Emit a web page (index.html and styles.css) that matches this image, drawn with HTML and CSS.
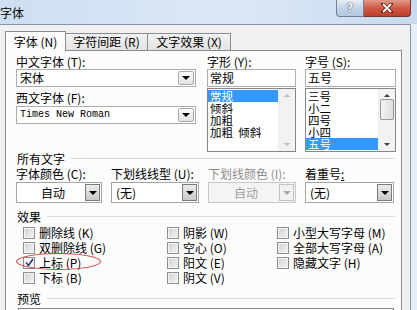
FILE: index.html
```html
<!DOCTYPE html>
<html lang="zh-CN">
<head>
  <meta charset="UTF-8" />
  <title>字体</title>
  <link rel="stylesheet" href="styles.css">
</head>
<body>

  <!-- Title bar -->
  <div class="titlebar">
    <span class="title">字体</span>
    <div class="caption-btns">
      <span class="cap-btn help">?</span>
      <span class="cap-btn close">
        <svg width="12" height="10" viewBox="0 0 12 10">
          <path d="M2 1 L10 9 M10 1 L2 9" stroke="#5a1d14" stroke-width="3.4" stroke-linecap="square"/>
          <path d="M2 1 L10 9 M10 1 L2 9" stroke="#fff" stroke-width="2"/>
        </svg>
      </span>
    </div>
  </div>

  <div class="frame">
    <div class="client">

      <!-- Tabs -->
      <div class="tabs">
        <span class="tab active">字体 (N)</span>
        <span class="tab">字符间距 (R)</span>
        <span class="tab">文字效果 (X)</span>
      </div>

      <div class="page">

        <!-- Font / style / size -->
        <div class="font-grid">
          <div class="col">
            <div class="label">中文字体 (T):</div>
            <div class="combo"><span class="val">宋体</span><span class="drop"></span></div>
            <div class="label second">西文字体 (F):</div>
            <div class="combo mono"><span class="val">Times New Roman</span><span class="drop"></span></div>
          </div>
          <div class="col">
            <div class="label">字形 (Y):</div>
            <div class="field">常规</div>
            <div class="listbox">
              <ul>
                <li class="sel">常规</li>
                <li>倾斜</li>
                <li>加粗</li>
                <li>加粗&nbsp;&nbsp;倾斜</li>
              </ul>
              <div class="vscroll off">
                <span class="arr up"></span>
                <span class="arr down"></span>
              </div>
            </div>
          </div>
          <div class="col">
            <div class="label">字号 (S):</div>
            <div class="field">五号</div>
            <div class="listbox">
              <ul>
                <li>三号</li>
                <li>小二</li>
                <li>四号</li>
                <li>小四</li>
                <li class="sel">五号</li>
              </ul>
              <div class="vscroll">
                <span class="arr up"></span>
                <span class="thumb"></span>
                <span class="arr down"></span>
              </div>
            </div>
          </div>
        </div>

        <!-- All text -->
        <div class="section"><span>所有文字</span></div>
        <div class="combo-grid">
          <div>
            <div class="label">字体颜色 (C):</div>
            <div class="combo big center"><span class="val">自动</span><span class="drop dark"></span></div>
          </div>
          <div>
            <div class="label">下划线线型 (U):</div>
            <div class="combo big"><span class="val">(无)</span><span class="drop dark"></span></div>
          </div>
          <div>
            <div class="label disabled">下划线颜色 (I):</div>
            <div class="combo big center off"><span class="val">自动</span><span class="drop"></span></div>
          </div>
          <div>
            <div class="label">着重号<u>:</u></div>
            <div class="combo big"><span class="val">(无)</span><span class="drop dark"></span></div>
          </div>
        </div>

        <!-- Effects -->
        <div class="section"><span>效果</span></div>
        <div class="checks">
          <div class="check-col first">
            <div class="check"><i class="box"></i>删除线 (K)</div>
            <div class="check"><i class="box"></i>双删除线 (G)</div>
            <div class="check marked">
              <i class="box on">
                <svg width="9" height="9" viewBox="0 0 9 9"><path d="M1 4.5 L3.5 7.5 L8 1" fill="none" stroke="#24377a" stroke-width="1.6"/></svg>
              </i>上标 (P)
              <span class="ring"></span>
            </div>
            <div class="check"><i class="box"></i>下标 (B)</div>
          </div>
          <div class="check-col second">
            <div class="check"><i class="box"></i>阴影 (W)</div>
            <div class="check"><i class="box"></i>空心 (O)</div>
            <div class="check"><i class="box"></i>阳文 (E)</div>
            <div class="check"><i class="box"></i>阴文 (V)</div>
          </div>
          <div class="check-col">
            <div class="check"><i class="box"></i>小型大写字母 (M)</div>
            <div class="check"><i class="box"></i>全部大写字母 (A)</div>
            <div class="check"><i class="box"></i>隐藏文字 (H)</div>
          </div>
        </div>

        <!-- Preview -->
        <div class="section preview-head"><span>预览</span></div>
        <div class="preview"></div>

      </div>
    </div>
    <div class="frame-edge"></div>
  </div>

</body>
</html>
```

FILE: styles.css
```css
* {
  box-sizing: border-box;
}

body {
  margin: 0;
  width: 417px;
  height: 310px;
  overflow: hidden;
  font-family: "Noto Sans CJK SC", sans-serif;
  font-size: 12px;
  color: #000;
  background: #dfe9f5;
}

/* Title bar */
.titlebar {
  height: 24px;
  display: flex;
  justify-content: space-between;
  align-items: flex-start;
  background: linear-gradient(to right, #cddff2, #dce8f6 55%, #c8daee);
}

.title {
  line-height: 26px;
}

.caption-btns {
  display: flex;
  margin-right: 6px;
}

.cap-btn {
  height: 17px;
  display: flex;
  align-items: center;
  justify-content: center;
  border: 1px solid #6f8298;
  border-top: 0;
}

.help {
  width: 28px;
  border-radius: 0 0 0 4px;
  background: linear-gradient(#e6eef7, #c3d3e6 50%, #b4c8de);
  color: #eef3f9;
  font-family: "DejaVu Sans", sans-serif;
  font-size: 12px;
  font-weight: bold;
  text-shadow: 0 0 1px #3c4e63, 0 0 1px #3c4e63;
}

.close {
  width: 47px;
  border-radius: 0 0 4px 0;
  border-color: #7a3328;
  border-left: 0;
  background: linear-gradient(#e29a89, #cf5a45 50%, #bf3f2b);
}

/* Window client */
.frame {
  display: flex;
  height: 286px;
}

.client {
  width: 411px;
  background: #f0f0f0;
  border-top: 1px solid #8796a8;
  border-right: 1px solid #8796a8;
  padding: 6px 8px 0 5px;
  overflow: hidden;
}

.frame-edge {
  flex: 1;
  background: #e6eef8;
}

/* Tabs */
.tabs {
  display: flex;
  align-items: flex-end;
  height: 19px;
}

.tab {
  height: 17px;
  line-height: 15px;
  text-align: center;
  border: 1px solid #898c95;
  border-bottom: 0;
  background: linear-gradient(#f2f2f2, #e3e3e3);
  margin-left: -1px;
}

.tab:nth-child(2) {
  width: 83px;
}

.tab:nth-child(3) {
  width: 84px;
}

.tab.active {
  width: 61px;
  height: 20px;
  margin-left: 0;
  margin-bottom: -1px;
  line-height: 19px;
  background: #fcfcfc;
  position: relative;
  z-index: 1;
}

/* Tab page */
.page {
  background: #fcfcfc;
  border: 1px solid #898c95;
  border-bottom: 0;
  height: 260px;
  padding: 4px 5px 0 10px;
}

.label {
  line-height: 14px;
  height: 14px;
  white-space: nowrap;
}

.label.second {
  margin-top: 4px;
  margin-bottom: 1px;
}

.label.disabled {
  color: #8d8d8d;
}

.font-grid {
  display: grid;
  grid-template-columns: 180px 89px 89px;
  column-gap: 11px;
}

.col:nth-child(3) {
  margin-left: -2px;
}

.combo {
  height: 18px;
  border: 1px solid #abadb3;
  background: #fff;
  display: flex;
  align-items: center;
  justify-content: space-between;
  padding: 1px 1px 1px 3px;
}

.combo .val {
  line-height: 14px;
  white-space: nowrap;
}

.combo.mono .val {
  font-family: "Liberation Mono", monospace;
  font-size: 10px;
}

.drop {
  width: 16px;
  height: 14px;
  border: 1px solid #a7a7a7;
  border-radius: 2px;
  background: linear-gradient(#fafafa, #e3e3e3);
  display: flex;
  align-items: center;
  justify-content: center;
}

.drop::after {
  content: "";
  border-left: 4px solid transparent;
  border-right: 4px solid transparent;
  border-top: 4px solid #000;
}

.field {
  height: 18px;
  line-height: 16px;
  border: 1px solid #abadb3;
  background: #fff;
  padding-left: 2px;
}

.listbox {
  margin-top: 1px;
  height: 64px;
  border: 1px solid #828790;
  background: #fff;
  display: flex;
}

.listbox ul {
  flex: 1;
  list-style: none;
  margin: 0;
  padding: 1px 0 0 0;
}

.listbox li {
  height: 12px;
  line-height: 12px;
  font-size: 11.5px;
  padding-left: 2px;
  white-space: nowrap;
}

.listbox li.sel {
  background: #3399ff;
  color: #fff;
}

.vscroll {
  width: 17px;
  background: #f2f2f2;
  border-left: 1px solid #ececec;
  display: flex;
  flex-direction: column;
  justify-content: space-between;
  align-items: center;
  padding: 5px 0;
}

.arr {
  width: 0;
  height: 0;
  border-left: 3px solid transparent;
  border-right: 3px solid transparent;
}

.arr.up {
  border-bottom: 3px solid #3c3c3c;
}

.arr.down {
  border-top: 3px solid #3c3c3c;
}

.vscroll.off .arr.up {
  border-bottom-color: #bcbcbc;
}

.vscroll.off .arr.down {
  border-top-color: #bcbcbc;
}

.thumb {
  width: 14px;
  height: 21px;
  margin-top: -22px;
  border: 1px solid #979797;
  border-radius: 2px;
  background: linear-gradient(to right, #f3f3f3, #dedede);
}

/* Group headings */
.section {
  display: flex;
  align-items: center;
  height: 13px;
  line-height: 13px;
  padding-left: 1px;
  padding-right: 1px;
}

.section::after {
  content: "";
  flex: 1;
  margin-left: 6px;
  border-top: 1px solid #d5dfe5;
}

.combo-grid {
  display: grid;
  grid-template-columns: 86px 88px 88px 89px;
  column-gap: 9px;
  margin-top: 2px;
}

.combo.big {
  height: 21px;
  margin-top: 1px;
  border-color: #a5a5a5;
  padding: 1px 1px 1px 4px;
}

.combo.big.center .val {
  flex: 1;
  text-align: center;
}

.combo.big .drop {
  width: 15px;
  height: 17px;
  border-radius: 0;
  border-color: #7b7b7b;
  background: linear-gradient(#ececec, #c9c9c9);
}

.combo.off {
  background: #f4f4f4;
  border-color: #c9c9c9;
  color: #a0a0a0;
}

.combo.big.off .drop {
  border-color: #c4c4c4;
  background: #f2f2f2;
}

.combo.big.off .drop::after {
  border-top-color: #a9a9a9;
}

.combo-grid + .section {
  margin-top: 7px;
}

/* Effects checkboxes */
.checks {
  display: flex;
  margin-top: 2px;
  padding-left: 7px;
}

.check-col.first {
  width: 144px;
}

.check-col.second {
  width: 110px;
}

.check {
  height: 15px;
  display: flex;
  align-items: center;
  white-space: nowrap;
  position: relative;
}

.box {
  width: 12px;
  height: 12px;
  margin-right: 4px;
  border: 1px solid #8e8f8f;
  background: linear-gradient(135deg, #d2d2d2, #f3f3f3);
  box-shadow: inset 0 0 0 1px #f4f4f4;
  display: flex;
  align-items: center;
  justify-content: center;
}

.box.on {
  background: #f7f7f7;
}

.ring {
  position: absolute;
  left: -7px;
  top: -2px;
  width: 85px;
  height: 17px;
  border: 1.5px solid #d0403c;
  border-radius: 50%;
}

.preview-head {
  margin-top: 7px;
}

.preview {
  margin: 3px 0 0 2px;
  width: 376px;
  height: 20px;
  border: 1px solid #828282;
  background: #fff;
}
```
